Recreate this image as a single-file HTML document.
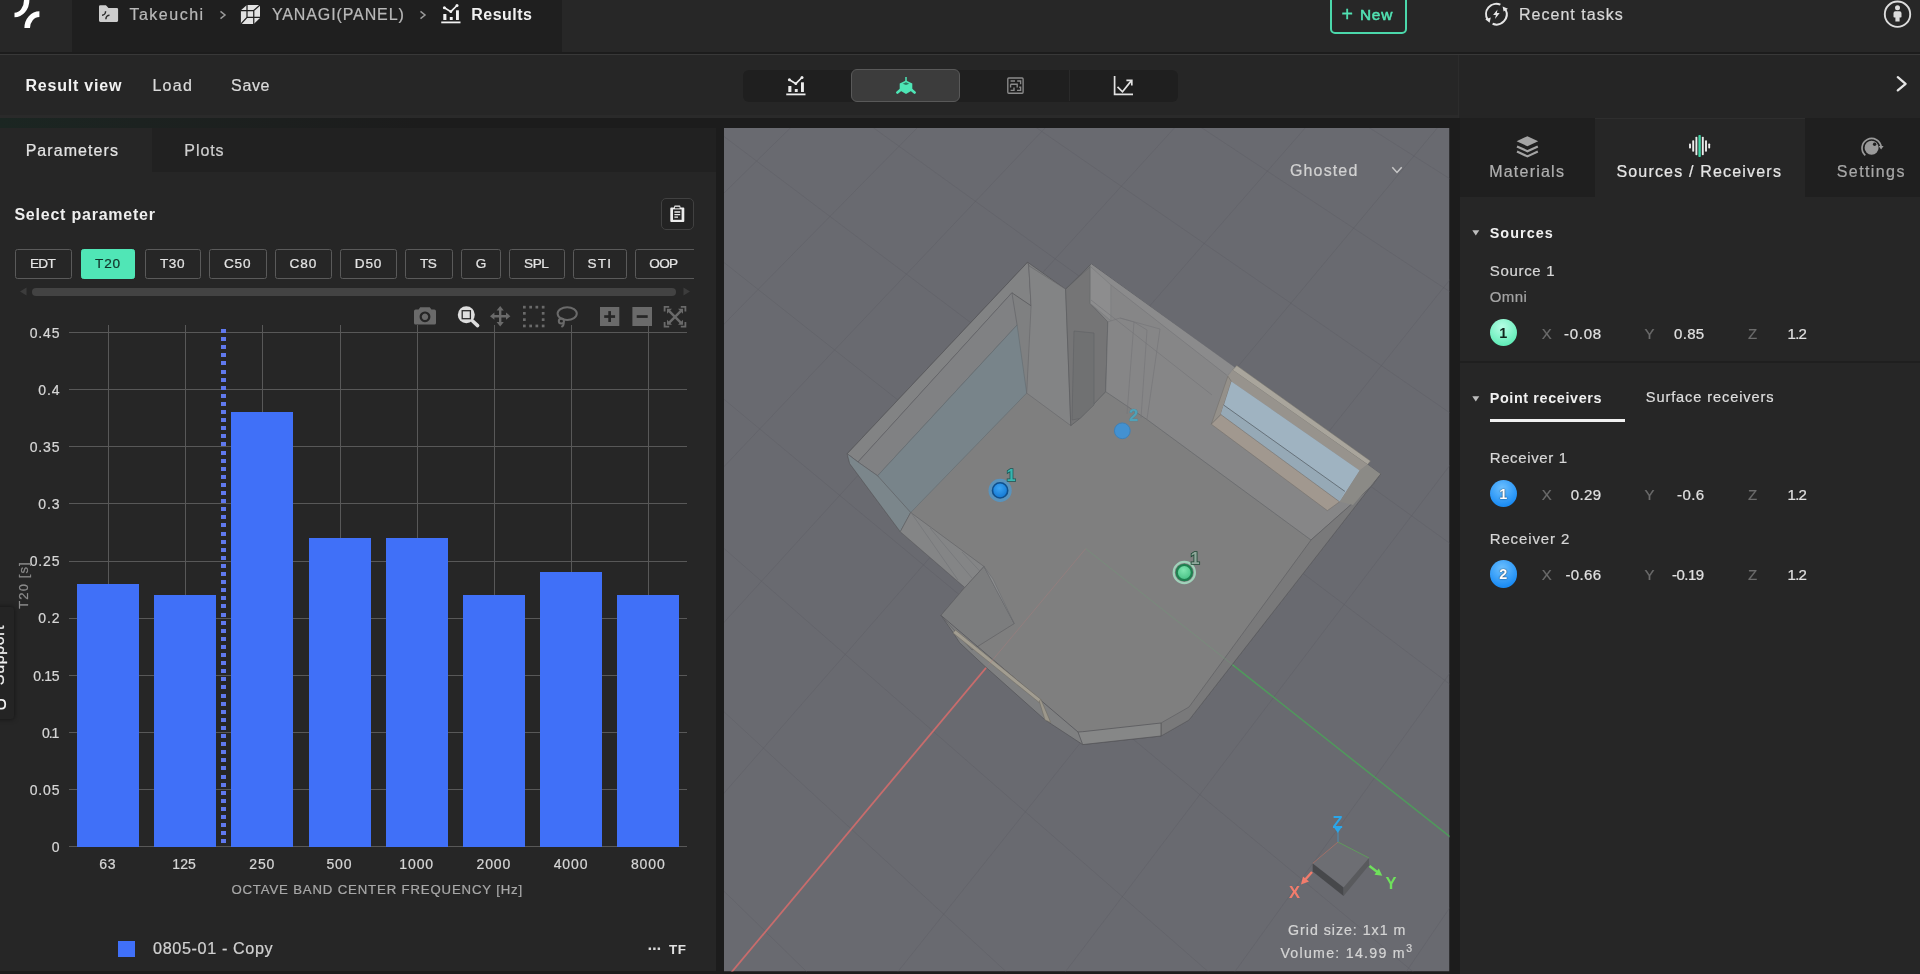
<!DOCTYPE html>
<html lang="en"><head><meta charset="utf-8"><title>Results</title>
<style>
*{box-sizing:border-box;margin:0;padding:0}
html,body{width:1920px;height:974px;overflow:hidden;background:#1c1c1c}
body{font-family:"Liberation Sans",sans-serif;color:#ddd}
#app{will-change:transform;position:relative;width:1920px;height:974px;overflow:hidden;background:#1c1c1c}
.abs{position:absolute}
.t{position:absolute;white-space:pre;display:block;-webkit-text-stroke:.22px currentColor}
svg{position:absolute;overflow:visible}
.st{font-family:"Liberation Sans",sans-serif;font-weight:700}
.pbtn{position:absolute;top:248.5px;height:30px;border:1px solid #5a5a5a;border-radius:2.5px;color:#e4e4e4;font-size:14.5px;letter-spacing:.9px;display:flex;align-items:center;justify-content:center;padding-left:1px}
.pbtn.on{background:#50e6b6;border-color:#50e6b6;color:#12332a}
</style></head>
<body><div id="app">
<div class="abs" style="left:0;top:0;width:1920px;height:52px;background:#272727"></div>
<div class="abs" style="left:72px;top:0;width:490px;height:52px;background:#1f1f1f"></div>
<div class="abs" style="left:0;top:52px;width:1920px;height:2px;background:#1c1c1c"></div>
<div class="abs" style="left:0;top:54px;width:1920px;height:1px;background:#383838"></div>
<div class="abs" style="left:0;top:55px;width:1920px;height:63px;background:#262626;border-bottom:3.5px solid #2a2a2a"></div>
<div class="abs" style="left:1458px;top:55px;width:462px;height:63px;background:#252525;border-left:1px solid #2c2c2c"></div>
<svg style="left:0;top:0" width="72" height="50" viewBox="0 0 72 50"><g fill="#fff">
<path d="M29.4 -1 L29.4 0 A14.9 17.2 0 0 1 14.5 17.2 L14.5 12.8 A9.5 12.8 0 0 0 24 0 L24 -1 Z"/><path d="M24.4 28 A15 16.75 0 0 1 39.4 11.25 L39.4 16.9 A9.4 11.1 0 0 0 30 28 Z"/></g></svg>
<svg style="left:98px;top:4px" width="22" height="20" viewBox="98 4 22 20">
<path d="M99 6.6 q0-1.3 1.3-1.3 h5.6 l2.6 2.6 h8.3 q1.3 0 1.3 1.3 v11.4 q0 1.3 -1.3 1.3 h-16.5 q-1.3 0 -1.3 -1.3z" fill="#cdcdcd"/>
<g fill="none" stroke="#2a2a2a" stroke-width="1.5"><path d="M102 15.2 A3.6 4 0 0 0 105.6 11.2"/><path d="M105.9 19.2 A3.6 4 0 0 1 109.5 15.2"/></g></svg>
<span class="t" style="left:129.40px;top:6.71px;font-size:16px;line-height:16px;letter-spacing:1.514px;color:#b9b9b9;">Takeuchi</span>
<svg style="left:218.7px;top:8.7px" width="8" height="12" viewBox="-4 -6 8 12"><path d="M-2.5 -3.7 L2 0 L-2.5 3.7" fill="none" stroke="#9a9a9a" stroke-width="1.5"/></svg>
<svg style="left:419.4px;top:8.7px" width="8" height="12" viewBox="-4 -6 8 12"><path d="M-2.5 -3.7 L2 0 L-2.5 3.7" fill="none" stroke="#9a9a9a" stroke-width="1.5"/></svg>
<svg style="left:239px;top:3px" width="23" height="23" viewBox="239 3 23 23">
<path d="M246.9 5 H260 V18.1 L253.75 24 H240.9 V10.3z" fill="#e2e2e2"/>
<g fill="none" stroke="#1f1f1f" stroke-width="1.25"><path d="M247 5V17.3H260M240.9 10.5H253.75V24M253.75 10.5L260 5M247 17.3L240.9 24"/></g></svg>
<span class="t" style="left:271.90px;top:6.71px;font-size:16px;line-height:16px;letter-spacing:0.890px;color:#b9b9b9;">YANAGI(PANEL)</span>
<svg style="left:440px;top:3px" width="22" height="22" viewBox="440 3 22 22">
<g fill="#f2f2f2"><rect x="441.25" y="21.5" width="19.25" height="1.8"/><rect x="443.3" y="14" width="3.1" height="6"/><rect x="449.8" y="17" width="2.9" height="3"/><rect x="456" y="10.3" width="2.9" height="9.7"/>
<circle cx="444.4" cy="7.8" r="1.5"/><circle cx="450.8" cy="11.7" r="1.4"/><circle cx="457" cy="5.5" r="1.5"/></g>
<path d="M444.4 7.8L450.8 11.7L457 5.5" fill="none" stroke="#f2f2f2" stroke-width="1.7"/></svg>
<span class="t" style="left:471.30px;top:6.71px;font-size:16px;line-height:16px;letter-spacing:0.467px;color:#f0f0f0;font-weight:700;-webkit-text-stroke:0;">Results</span>
<div class="abs" style="left:1329.5px;top:-6px;width:77px;height:39.8px;border:2px solid #4bd8ab;border-radius:5px"></div>
<span class="t" style="left:1341.60px;top:5.01px;font-size:19.6px;line-height:19.6px;letter-spacing:0.000px;color:#52e3b4;-webkit-text-stroke:.35px #52e3b4;">+</span>
<span class="t" style="left:1359.90px;top:7.06px;font-size:15.4px;line-height:15.4px;letter-spacing:0.796px;color:#52e3b4;-webkit-text-stroke:.55px #52e3b4;">New</span>
<svg style="left:1483px;top:1px" width="27" height="27" viewBox="1483 1 27 27"><g fill="none" stroke="#e6e6e6" stroke-width="2">
<path d="M1500.4 4.7 A10.3 10.3 0 0 0 1487.6 19.6"/><path d="M1492.6 23.8 A10.3 10.3 0 0 0 1505.6 9.6"/></g>
<path d="M1485.3 19.2 L1490.8 17.6 L1489.6 22.8z M1502.6 6.4 L1508 8.8 L1503.6 11.4z" fill="#e6e6e6"/>
<path d="M1497.5 9.4L1493.1 14.9H1495.9L1495 19.1L1499.7 13.1H1496.9z" fill="#e6e6e6"/></svg>
<span class="t" style="left:1518.90px;top:7.36px;font-size:16px;line-height:16px;letter-spacing:1.038px;color:#d8d8d8;">Recent tasks</span>
<svg style="left:1883px;top:0px" width="30" height="30" viewBox="1883 0 30 30"><circle cx="1897.500" cy="14.200" r="12.700" fill="none" stroke="#dcdcdc" stroke-width="1.900"/>
<circle cx="1897.500" cy="7.800" r="2.500" fill="#dcdcdc"/><path d="M1895.400 11.300 h4.200 q1.900 0 1.900 1.900 v3.600 q0 .8 -.8 .8 h-1.100 v4 h-4.200 v-4 h-1.100 q-.8 0 -.8 -.8 v-3.600 q0-1.900 1.900-1.900z" fill="#dcdcdc"/></svg>
<span class="t" style="left:25.40px;top:77.96px;font-size:16px;line-height:16px;letter-spacing:0.797px;color:#f2f2f2;font-weight:700;-webkit-text-stroke:0;">Result view</span>
<span class="t" style="left:152.40px;top:77.96px;font-size:16px;line-height:16px;letter-spacing:1.268px;color:#dadada;">Load</span>
<span class="t" style="left:231.10px;top:77.96px;font-size:16px;line-height:16px;letter-spacing:0.610px;color:#dadada;">Save</span>
<svg style="left:1894px;top:74px" width="16" height="20" viewBox="1894 74 16 20"><path d="M1897.800 77.200L1905.600 83.800L1897.800 90.400" fill="none" stroke="#e4e4e4" stroke-width="2.300" stroke-linecap="round" stroke-linejoin="round"/></svg>
<div class="abs" style="left:743px;top:69.5px;width:435px;height:32px;background:#1f1f1f;border-radius:6px"></div>
<div class="abs" style="left:851.4px;top:69.3px;width:108.8px;height:32.6px;background:#3c3c3c;border:1px solid #595959;border-radius:6px"></div>
<div class="abs" style="left:1068.5px;top:70px;width:1px;height:31px;background:#2a2a2a"></div>
<svg style="left:785.4px;top:74.9px" width="22" height="22" viewBox="440 3 22 22">
<g fill="#ececec"><rect x="441.25" y="21.5" width="19.25" height="1.8"/><rect x="443.3" y="14" width="3.1" height="6"/><rect x="449.8" y="17" width="2.9" height="3"/><rect x="456" y="10.3" width="2.9" height="9.7"/>
<circle cx="444.4" cy="7.8" r="1.5"/><circle cx="450.8" cy="11.7" r="1.4"/><circle cx="457" cy="5.5" r="1.5"/></g>
<path d="M444.4 7.8L450.8 11.7L457 5.5" fill="none" stroke="#ececec" stroke-width="1.7"/></svg>
<svg style="left:894px;top:75px" width="24" height="22" viewBox="894 75 24 22">
<path d="M906 76.9 V82" stroke="#4ee6b6" stroke-width="1.5"/>
<path d="M906 80.500 L912.300 83.400 V90.300 L906 94.100 L899.700 90.300 V83.400z" fill="#4ee6b6"/>
<path d="M900.400 90 L897.400 92.500 M911.600 90 L914.600 92.500" stroke="#4ee6b6" stroke-width="2.700" stroke-linecap="round"/>
<path d="M906 82.300 L909.300 83.750 L906 85.100 L902.700 83.750z" fill="#2f7a63"/>
</svg>
<svg style="left:1006px;top:76px" width="19" height="19" viewBox="1006 76 19 19"><g fill="none" stroke="#8c8c8c" stroke-width="1.350">
<rect x="1007.800" y="77.950" width="15.300" height="15.300" rx="1"/><path d="M1010.600 81h4.400M1017.200 81h3.400v3.300 M1010.600 84.200h6.600v3.200 M1010.600 84.200v3.200 M1010.600 90.400h3.400v-3 M1017 90.400h3.600v-3.200h-1.400"/></g></svg>
<svg style="left:1112px;top:74px" width="23" height="23" viewBox="1112 74 23 23"><g fill="none" stroke="#e2e2e2" stroke-width="1.700">
<path d="M1114.600 76V94.300H1133"/><path d="M1117.500 86.800L1122.500 91.800L1131.400 80.600"/><path d="M1126.400 80.300H1131.800V85.600"/></g></svg>
<div class="abs" style="left:0;top:118px;width:500px;height:10px;background:linear-gradient(90deg,#1b2622 0,#1c2220 140px,#1c1c1c 420px)"></div>
<div class="abs" style="left:0;top:128px;width:716px;height:843px;background:#262626"></div>
<div class="abs" style="left:152px;top:128px;width:564px;height:44px;background:#212121"></div>
<span class="t" style="left:25.65px;top:142.86px;font-size:16px;line-height:16px;letter-spacing:1.061px;color:#e4e4e4;">Parameters</span>
<span class="t" style="left:184.30px;top:142.86px;font-size:16px;line-height:16px;letter-spacing:0.932px;color:#cfcfcf;">Plots</span>
<span class="t" style="left:14.40px;top:206.96px;font-size:16px;line-height:16px;letter-spacing:0.776px;color:#efefef;font-weight:700;-webkit-text-stroke:0;">Select parameter</span>
<div class="abs" style="left:661px;top:198px;width:33px;height:32px;border:1px solid #414141;border-radius:5px;background:#232323"></div>
<svg style="left:668px;top:204px" width="20" height="20" viewBox="668 204 20 20"><path d="M671.2 207.6 h3 v-1.2 q0-.8 .8-.8 h4.6 q.8 0 .8 .8 v1.2 h3 q.9 0 .9 .9 v12.6 q0 .9 -.9 .9 h-12.2 q-.9 0 -.9 -.9 v-12.6 q0-.9 .9-.9z" fill="#ededed"/>
<rect x="673" y="209.4" width="8.6" height="10.4" fill="#262626"/><rect x="675" y="206.8" width="4.6" height="1.6" fill="#262626"/>
<path d="M674.4 212h5.8M674.4 214.6h5.8M674.4 217.2h3.6" stroke="#ededed" stroke-width="1.3"/></svg>
<div class="abs" style="left:0;top:240px;width:694.3px;height:48px;overflow:hidden">
<div class="pbtn" style="left:15.4px;top:8.5px;width:56.2px"></div>
<span class="t" style="left:29.90px;top:17.29px;font-size:13.6px;line-height:13.6px;letter-spacing:-0.601px;color:#e4e4e4;">EDT</span>
<div class="pbtn on" style="left:81.0px;top:8.5px;width:54.4px"></div>
<span class="t" style="left:95.10px;top:17.29px;font-size:13.6px;line-height:13.6px;letter-spacing:0.782px;color:#12332a;">T20</span>
<div class="pbtn" style="left:144.8px;top:8.5px;width:56.2px"></div>
<span class="t" style="left:160.08px;top:17.29px;font-size:13.6px;line-height:13.6px;letter-spacing:0.482px;color:#e4e4e4;">T30</span>
<div class="pbtn" style="left:209.0px;top:8.5px;width:57.6px"></div>
<span class="t" style="left:223.90px;top:17.29px;font-size:13.6px;line-height:13.6px;letter-spacing:0.825px;color:#e4e4e4;">C50</span>
<div class="pbtn" style="left:275.0px;top:8.5px;width:56.9px"></div>
<span class="t" style="left:289.45px;top:17.29px;font-size:13.6px;line-height:13.6px;letter-spacing:0.925px;color:#e4e4e4;">C80</span>
<div class="pbtn" style="left:340.3px;top:8.5px;width:56.7px"></div>
<span class="t" style="left:354.75px;top:17.29px;font-size:13.6px;line-height:13.6px;letter-spacing:0.825px;color:#e4e4e4;">D50</span>
<div class="pbtn" style="left:405.4px;top:8.5px;width:47.4px"></div>
<span class="t" style="left:420.05px;top:17.29px;font-size:13.6px;line-height:13.6px;letter-spacing:-0.479px;color:#e4e4e4;">TS</span>
<div class="pbtn" style="left:461.2px;top:8.5px;width:39.8px"></div>
<span class="t" style="left:475.82px;top:17.29px;font-size:13.6px;line-height:13.6px;letter-spacing:0.000px;color:#e4e4e4;">G</span>
<div class="pbtn" style="left:509.4px;top:8.5px;width:55.4px"></div>
<span class="t" style="left:524.10px;top:17.29px;font-size:13.6px;line-height:13.6px;letter-spacing:-0.479px;color:#e4e4e4;">SPL</span>
<div class="pbtn" style="left:573.2px;top:8.5px;width:53.4px"></div>
<span class="t" style="left:587.60px;top:17.29px;font-size:13.6px;line-height:13.6px;letter-spacing:1.121px;color:#e4e4e4;">STI</span>
<div class="pbtn" style="left:635.0px;top:8.5px;width:65.0px"></div>
<span class="t" style="left:649.20px;top:17.29px;font-size:13.6px;line-height:13.6px;letter-spacing:-0.614px;color:#e4e4e4;">OOP</span>
</div>
<div class="abs" style="left:32px;top:287.5px;width:644px;height:8px;border-radius:4px;background:#434343"></div>
<svg style="left:18px;top:286px" width="10" height="11" viewBox="0 0 10 11"><path d="M8.5 1.5v8L2 5.5z" fill="#3c3c3c"/></svg>
<svg style="left:682px;top:286px" width="10" height="11" viewBox="0 0 10 11"><path d="M1.5 1.5v8L8 5.5z" fill="#3c3c3c"/></svg>
<svg style="left:0;top:300px" width="716" height="600" viewBox="0 300 716 600" shape-rendering="crispEdges"><rect x="69" y="845.5" width="618" height="1" fill="#585858"/><rect x="69" y="788.5" width="618" height="1" fill="#585858"/><rect x="69" y="731.5" width="618" height="1" fill="#585858"/><rect x="69" y="674.5" width="618" height="1" fill="#585858"/><rect x="69" y="617.5" width="618" height="1" fill="#585858"/><rect x="69" y="560.5" width="618" height="1" fill="#585858"/><rect x="69" y="502.5" width="618" height="1" fill="#585858"/><rect x="69" y="445.5" width="618" height="1" fill="#585858"/><rect x="69" y="388.5" width="618" height="1" fill="#585858"/><rect x="69" y="331.5" width="618" height="1" fill="#585858"/><rect x="107.5" y="325" width="1" height="521.5" fill="#585858"/><rect x="184.5" y="325" width="1" height="521.5" fill="#585858"/><rect x="261.5" y="325" width="1" height="521.5" fill="#585858"/><rect x="339.5" y="325" width="1" height="521.5" fill="#585858"/><rect x="416.5" y="325" width="1" height="521.5" fill="#585858"/><rect x="493.5" y="325" width="1" height="521.5" fill="#585858"/><rect x="570.5" y="325" width="1" height="521.5" fill="#585858"/><rect x="647.5" y="325" width="1" height="521.5" fill="#585858"/><rect x="76.9" y="583.5" width="62.1" height="263.0" fill="#4070f8"/><rect x="154.1" y="595.0" width="62.1" height="251.5" fill="#4070f8"/><rect x="231.3" y="412.0" width="62.1" height="434.5" fill="#4070f8"/><rect x="308.5" y="537.8" width="62.1" height="308.7" fill="#4070f8"/><rect x="385.7" y="537.8" width="62.1" height="308.7" fill="#4070f8"/><rect x="462.9" y="595.0" width="62.1" height="251.5" fill="#4070f8"/><rect x="540.1" y="572.1" width="62.1" height="274.4" fill="#4070f8"/><rect x="617.3" y="595.0" width="62.1" height="251.5" fill="#4070f8"/><path d="M223.7 329V847" stroke="#6079ee" stroke-width="4.500" stroke-dasharray="4 4.1" fill="none"/></svg>
<span class="t" style="left:51.81px;top:840.05px;font-size:14px;line-height:14px;letter-spacing:0.000px;color:#d6d6d6;">0</span>
<span class="t" style="left:29.65px;top:782.88px;font-size:14px;line-height:14px;letter-spacing:0.900px;color:#d6d6d6;">0.05</span>
<span class="t" style="left:42.00px;top:725.71px;font-size:14px;line-height:14px;letter-spacing:-1.131px;color:#d6d6d6;">0.1</span>
<span class="t" style="left:33.30px;top:668.54px;font-size:14px;line-height:14px;letter-spacing:-0.316px;color:#d6d6d6;">0.15</span>
<span class="t" style="left:38.34px;top:611.37px;font-size:14px;line-height:14px;letter-spacing:0.900px;color:#d6d6d6;">0.2</span>
<span class="t" style="left:29.65px;top:554.20px;font-size:14px;line-height:14px;letter-spacing:0.900px;color:#d6d6d6;">0.25</span>
<span class="t" style="left:38.34px;top:497.03px;font-size:14px;line-height:14px;letter-spacing:0.900px;color:#d6d6d6;">0.3</span>
<span class="t" style="left:29.65px;top:439.86px;font-size:14px;line-height:14px;letter-spacing:0.900px;color:#d6d6d6;">0.35</span>
<span class="t" style="left:38.34px;top:382.69px;font-size:14px;line-height:14px;letter-spacing:0.900px;color:#d6d6d6;">0.4</span>
<span class="t" style="left:29.65px;top:325.52px;font-size:14px;line-height:14px;letter-spacing:0.900px;color:#d6d6d6;">0.45</span>
<span class="t" style="left:99.16px;top:856.95px;font-size:14px;line-height:14px;letter-spacing:0.900px;color:#d6d6d6;">63</span>
<span class="t" style="left:172.30px;top:856.95px;font-size:14px;line-height:14px;letter-spacing:0.120px;color:#d6d6d6;">125</span>
<span class="t" style="left:249.22px;top:856.95px;font-size:14px;line-height:14px;letter-spacing:0.900px;color:#d6d6d6;">250</span>
<span class="t" style="left:326.42px;top:856.95px;font-size:14px;line-height:14px;letter-spacing:0.900px;color:#d6d6d6;">500</span>
<span class="t" style="left:399.28px;top:856.95px;font-size:14px;line-height:14px;letter-spacing:0.900px;color:#d6d6d6;">1000</span>
<span class="t" style="left:476.48px;top:856.95px;font-size:14px;line-height:14px;letter-spacing:0.900px;color:#d6d6d6;">2000</span>
<span class="t" style="left:553.68px;top:856.95px;font-size:14px;line-height:14px;letter-spacing:0.900px;color:#d6d6d6;">4000</span>
<span class="t" style="left:630.88px;top:856.95px;font-size:14px;line-height:14px;letter-spacing:0.900px;color:#d6d6d6;">8000</span>
<span class="t" style="left:231.40px;top:882.93px;font-size:13.2px;line-height:13.2px;letter-spacing:0.843px;color:#a8a8a8;">OCTAVE BAND CENTER FREQUENCY [Hz]</span>
<span class="t" style="left:22.6px;top:585px;font-size:13px;line-height:13px;letter-spacing:1.1px;color:#8c8c8c;transform:translate(-50%,-50%) rotate(-90deg)">T20 [s]</span>
<div class="abs" style="left:118px;top:941px;width:17px;height:16px;background:#4070f8"></div>
<span class="t" style="left:153.00px;top:940.49px;font-size:16.2px;line-height:16.2px;letter-spacing:0.625px;color:#d0d0d0;">0805-01 - Copy</span>
<span class="t" style="left:647.40px;top:940.11px;font-size:17px;line-height:17px;letter-spacing:0.000px;color:#d8d8d8;font-weight:700;-webkit-text-stroke:0;letter-spacing:-1.05px;">···</span>
<span class="t" style="left:668.90px;top:943.16px;font-size:13.4px;line-height:13.4px;letter-spacing:0.629px;color:#e0e0e0;font-weight:700;-webkit-text-stroke:0;">TF</span>
<svg style="left:410px;top:302px" width="280" height="30" viewBox="410 302 280 30">
<g fill="#6a6a6a">
<path d="M414 311.2 q0-1.6 1.6-1.6 h3 l1.6-2.4 h9.6 l1.6 2.4 h3 q1.6 0 1.6 1.6 v11.8 q0 1.6 -1.6 1.6 h-18.8 q-1.600 0 -1.600 -1.600z M425 311.4 a5.400 5.400 0 1 0 0.010 0z M425 313.600 a3.200 3.200 0 1 1 -0.010 0z" fill-rule="evenodd"/>
<path d="M500.200 306 l3.600 4.400 h-2.400 v4.600 h4.600 v-2.400 l4.400 3.600 l-4.400 3.600 v-2.400 h-4.600 v4.600 h2.400 l-3.600 4.400 l-3.600 -4.400 h2.400 v-4.600 h-4.600 v2.400 l-4.400 -3.600 l4.400 -3.600 v2.400 h4.600 v-4.600 h-2.400z"/>
<rect x="600" y="307" width="19.300" height="19"/><rect x="632.400" y="307" width="19.600" height="19"/>
</g>
<g fill="#262626"><rect x="604.200" y="315.200" width="10.900" height="2.700"/><rect x="608.300" y="311.100" width="2.700" height="10.900"/><rect x="636.700" y="315.200" width="11" height="2.700"/></g>
<circle cx="466.300" cy="314.700" r="8.500" fill="#dedede"/><path d="M472.600 321 l5 4.600" stroke="#dedede" stroke-width="3.600" stroke-linecap="round" fill="none"/><rect x="462.200" y="310.700" width="8.200" height="8" fill="none" stroke="#2a2a2a" stroke-width="1.300"/>
<g fill="#6a6a6a"><rect x="523" y="305.8" width="2.700" height="2.700"/><rect x="523" y="312" width="2.700" height="2.700"/><rect x="523" y="318.3" width="2.700" height="2.700"/><rect x="523" y="324.6" width="2.700" height="2.700"/><rect x="529.3" y="305.8" width="2.700" height="2.700"/><rect x="529.3" y="324.6" width="2.700" height="2.700"/><rect x="535.5" y="305.8" width="2.700" height="2.700"/><rect x="535.5" y="324.6" width="2.700" height="2.700"/><rect x="541.8" y="305.8" width="2.700" height="2.700"/><rect x="541.8" y="312" width="2.700" height="2.700"/><rect x="541.8" y="318.3" width="2.700" height="2.700"/><rect x="541.8" y="324.6" width="2.700" height="2.700"/></g>
<g fill="none" stroke="#6a6a6a" stroke-width="2"><ellipse cx="567.200" cy="313.600" rx="9.600" ry="6.400"/><circle cx="561.400" cy="321" r="2.600"/><path d="M563.400 322.600 q1 2.600 -2 4.400"/></g>
<g fill="none" stroke="#6a6a6a" stroke-width="1.800"><path d="M664.600 311.400v-4.600h4.600 M680.800 306.800h4.600v4.600 M685.400 322v4.600h-4.600 M669.200 326.600h-4.600v-4.600"/></g>
<g fill="none" stroke="#6a6a6a" stroke-width="2.400"><path d="M669 310.800l12 12M681 310.800l-12 12"/></g>
<g fill="#6a6a6a"><path d="M667 308.800h5l-5 5z M683 308.800h-5l5 5z M667 324.800h5l-5 -5z M683 324.800h-5l5 -5z"/></g>
</svg>
<div class="abs" style="left:-4px;top:606.5px;width:18px;height:112.5px;background:#242424;border-radius:3px;box-shadow:0 0 5px rgba(0,0,0,.55)"></div>
<span class="t" style="left:-1.200px;top:654.5px;font-size:16px;line-height:16px;letter-spacing:.6px;color:#f0f0f0;transform:translate(-50%,-50%) rotate(-90deg)">Support</span>
<svg style="left:0;top:697px" width="8" height="14" viewBox="0 697 8 14"><path d="M-2 699.800 h3.600 q3.600 0 3.600 4.400 q0 4.400 -3.600 4.400 h-3.600" fill="none" stroke="#f0f0f0" stroke-width="1.800"/></svg>
<svg style="left:724px;top:128px" width="725.5" height="843.5" viewBox="724 128 725.5 843.5"><defs><clipPath id="vc"><rect x="724" y="128" width="725.5" height="843.5"/></clipPath><radialGradient id="gb" cx="45%" cy="35%" r="65%"><stop offset="0" stop-color="#3aa4f4"/><stop offset="1" stop-color="#1478d2"/></radialGradient><radialGradient id="gg" cx="45%" cy="35%" r="65%"><stop offset="0" stop-color="#7fe6b0"/><stop offset="1" stop-color="#45c084"/></radialGradient></defs><g clip-path="url(#vc)"><rect x="724" y="128" width="725.5" height="843.5" fill="#696a70"/><path d="M-259.0 606.7L869.3 -364.9M-201.6 678.2L932.2 -328.1M-141.4 753.2L997.3 -290.0M-78.3 831.8L1064.8 -250.5M-12.0 914.3L1134.8 -209.6M57.7 1001.0L1207.5 -167.1M131.0 1092.3L1282.9 -123.0M208.3 1188.5L1361.2 -77.1M289.9 1290.1L1442.7 -29.5M467.5 1511.2L1615.7 71.8M564.3 1631.7L1707.8 125.6M667.2 1759.8L1803.8 181.8M776.7 1896.2L1904.1 240.4M893.5 2041.6L2008.8 301.7M1018.4 2197.1L2118.5 365.8M1152.2 2363.6L2233.3 433.0M1295.8 2542.5L2353.7 503.4M-259.0 606.7L1295.8 2542.5M-161.6 522.9L1399.8 2342.2M-68.2 442.4L1496.9 2154.9M21.4 365.3L1587.9 1979.6M107.4 291.2L1673.3 1815.0M190.1 220.0L1753.6 1660.2M269.7 151.4L1829.2 1514.4M346.3 85.5L1900.6 1376.8M491.1 -39.3L2032.0 1123.6M559.7 -98.4L2092.6 1006.8M626.0 -155.4L2150.1 895.9M689.9 -210.4L2204.8 790.6M751.7 -263.7L2256.8 690.2M811.5 -315.1L2306.4 594.6M869.3 -364.9L2353.7 503.4" fill="none" stroke="#5c5d63" stroke-width="1" opacity=".42"/><path d="M1527.5 20.1L1085.7 548.6" stroke="#5c5d63" stroke-width="1" opacity=".42"/><path d="M420.0 22.0L1085.7 548.6" stroke="#5c5d63" stroke-width="1" opacity=".42"/><path d="M1085.7 548.6L656.9 1061.5" stroke="#c86c6c" stroke-width="1.800"/><path d="M1085.7 548.6L1593.2 950.1" stroke="#4f9a5c" stroke-width="1.5"/><polygon points="1027.6,262.2 1065.6,289.2 1091.0,264.0 1380.4,474.1 1189.0,720.0 1161.0,736.0 1082.7,744.6 1045.0,719.9 984.2,665.7 959.6,642.7 952.0,631.0 941.0,615.4 964.8,587.5 900.3,531.7 849.7,463.6 847.2,453.8" fill="#7f8081" stroke="#55565a" stroke-width=".75" stroke-linejoin="round"/><polygon points="1026.7,393.1 910.7,512.5 984.0,566.5 964.8,587.5 941.0,615.4 1078.0,732.0 1082.7,731.7 1161.0,723.0 1189.0,707.0 1311.0,540.0 1146.8,419.4 1105.7,391.7 1080.0,418.4 1070.8,425.6" fill="#7f7f7f"/><polygon points="1027.6,262.2 847.2,453.8 858.0,462.0 1011.9,292.8 1031.1,305.8 1028.8,265.7" fill="#828384" stroke="#55565a" stroke-width=".75" stroke-linejoin="round"/><polygon points="1011.9,292.8 858.0,462.0 877.6,475.8 1017.1,325.0" fill="#808183" stroke="#5f6064" stroke-width=".6"/><polygon points="1017.1,325.0 877.6,475.8 900.3,531.7 910.7,512.5 1026.7,393.1" fill="#78848a" stroke="#636b70" stroke-width=".6"/><polygon points="1028.8,265.7 1065.6,289.2 1070.8,425.6 1026.7,393.1 1031.1,305.8" fill="#838485" stroke="#66676a" stroke-width=".6"/><polygon points="1065.6,289.2 1090.3,266.4 1090.3,303.4 1107.8,321.9 1105.7,391.7 1080.0,418.4 1070.8,425.6" fill="#757576" stroke="#5a5b5e" stroke-width=".7"/><polygon points="1074.0,331.0 1094.0,333.0 1094.0,405.0 1080.0,418.4 1072.0,420.0" fill="#707172" stroke="#606164" stroke-width=".6"/><polygon points="1091.0,264.0 1380.4,474.1 1372.0,486.0 1311.0,540.0 1146.8,419.4 1105.7,391.7 1107.8,321.9 1090.3,303.4" fill="#868687" stroke="#606164" stroke-width=".6"/><polygon points="1091.0,264.0 1234.9,367.5 1226.9,375.3 1110.9,284.9 1090.3,266.4" fill="#8b8b8c"/><polygon points="1090.3,266.4 1110.9,284.9 1110.8,320.6 1090.3,303.4" fill="#8d8d8e" stroke="#77787a" stroke-width=".5"/><path d="M1110.9 284.9L1226.9 375.3 M1091 300 L1212 395 M1107.800 321.900 L1120 318 L1134 322 L1147 330 L1141 418 M1134 322 L1127 414 M1120 318 L1160 329 L1147 419" fill="none" stroke="#737477" stroke-width=".6"/><polygon points="1380.4,474.1 1189.0,720.0 1161.0,736.0 1161.0,723.0 1189.0,707.0 1311.0,540.0 1372.0,486.0" fill="#79797a" stroke="#5a5b5e" stroke-width=".6"/><polygon points="1078.0,732.0 1082.7,731.7 1161.0,723.0 1161.0,736.0 1082.7,744.6" fill="#868787" stroke="#55565a" stroke-width=".75" stroke-linejoin="round"/><polygon points="847.2,453.8 849.7,463.6 900.3,531.7 910.7,512.5 877.6,475.8 858.0,462.0" fill="#7b868b" stroke="#5a5b5e" stroke-width=".6"/><polygon points="910.7,512.5 900.3,531.7 964.8,587.5 984.0,566.5" fill="#848586" stroke="#5f6063" stroke-width=".6"/><path d="M912 514L958 580M930 528L972 578M962 552L990 582" fill="none" stroke="#717275" stroke-width=".6"/><polygon points="964.8,587.5 941.0,615.4 972.0,650.0 1014.2,623.6 984.0,566.5" fill="#7c7d7e" stroke="#5c5d60" stroke-width=".6"/><polygon points="984.0,566.5 993.0,579.0 1014.2,623.6" fill="#8b8c8d" stroke="#6a6b6e" stroke-width=".6"/><path d="M941 615.4L1078 732" stroke="#55565a" stroke-width=".8" fill="none"/><polygon points="953.0,632.9 955.5,630.0 1041.0,699.5 1039.2,702.5" fill="#a29d91" stroke="#6a675f" stroke-width=".5"/><polygon points="1039.2,701.0 1041.0,699.5 1050.7,722.4 1045.0,719.9" fill="#9c978b" stroke="#6a675f" stroke-width=".5"/><polygon points="1234.9,367.5 1236.8,365.6 1370.5,461.0 1367.5,464.5 1232.5,370.0" fill="#a9a59c" stroke="#77746d" stroke-width=".5"/><polygon points="1232.5,370.0 1367.5,464.5 1359.7,470.4 1231.4,381.4 1227.9,376.2" fill="#97938d"/><polygon points="1227.9,376.2 1231.4,381.4 1220.9,414.6 1211.3,424.2" fill="#94908a" stroke="#6e6b66" stroke-width=".5"/><polygon points="1231.4,381.4 1359.7,470.4 1339.6,501.8 1220.9,414.6" fill="#9fb3c1"/><polygon points="1223.6,405.0 1344.9,491.4 1339.6,501.8 1220.9,414.6" fill="#96a9b6"/><polygon points="1220.9,414.6 1339.6,501.8 1327.4,510.6 1211.3,424.2" fill="#a1988f" stroke="#6e6b66" stroke-width=".5"/><polygon points="1359.7,470.4 1367.5,464.5 1380.4,474.1 1353.0,505.0 1339.6,501.8" fill="#8b8a86"/><path d="M1223.6 405L1344.9 491.4" fill="none" stroke="#59626a" stroke-width=".8"/><path d="M1085.7 548.6L988.1 665.4" stroke="#b47c7c" stroke-width="1" opacity=".35"/><path d="M1085.7 548.6L1234.6 666.4" stroke="#6aa274" stroke-width="1" opacity=".35"/><circle cx="1000.1" cy="490.4" r="11.6" fill="#3ba4ee" opacity=".55"/><circle cx="1000.1" cy="490.4" r="7.6" fill="url(#gb)" stroke="#0f4f8c" stroke-width="1.6"/><circle cx="1122.3" cy="430.8" r="7.9" fill="#3e93d8" stroke="#3a80ba" stroke-width="1" opacity=".92"/><circle cx="1184.300" cy="572.500" r="10.600" fill="none" stroke="#a9e6c9" stroke-width="2.200" opacity=".8"/><circle cx="1184.300" cy="572.500" r="7.600" fill="url(#gg)" stroke="#1f8050" stroke-width="2.300"/><text x="1006.600" y="481" class="st" font-size="16.500" fill="#38b6b0" stroke="#1b5656" stroke-width="1.500" paint-order="stroke">1</text><text x="1129" y="421.400" class="st" font-size="16.500" fill="#4aa6c0" stroke="#4a8494" stroke-width=".7" paint-order="stroke" opacity=".9">2</text><text x="1190.400" y="563.600" class="st" font-size="16.500" fill="#8fa89b" stroke="#1f4a36" stroke-width="1.700" paint-order="stroke">1</text><polygon points="1338,842 1369,858 1343.6,887.5 1312.7,863.4" fill="#6d6e73"/><polygon points="1312.7,863.4 1312.7,871.4 1343.6,896 1343.6,887.5" fill="#47484b"/><polygon points="1343.6,887.5 1343.6,896 1369,865.2 1369,858" fill="#595a5d"/><path d="M1338 842L1312.700 863.400" stroke="#a07068" stroke-width="1"/><path d="M1338 842L1369 858" stroke="#5f9a5c" stroke-width="1"/><path d="M1338 842V832" stroke="#4a8fb8" stroke-width="1"/><path d="M1312 872 L1303.500 881.500" stroke="#f27c6c" stroke-width="2.400"/><path d="M1301 884.500 L1303 876.500 L1309 881.500z" fill="#f27c6c"/><path d="M1369.500 866 L1378 872.500" stroke="#6fe05c" stroke-width="2.400"/><path d="M1382.300 875.800 L1374.500 874.800 L1378.800 868.600z" fill="#6fe05c"/><path d="M1337.800 833 l-3.400 -5 h6.800z" fill="#2aa6ea"/><text x="1332.400" y="828.300" class="st" font-size="16.500" fill="#2aa6ea">Z</text><text x="1289" y="898" class="st" font-size="16.500" fill="#f27c6c">X</text><text x="1385.500" y="888.600" class="st" font-size="16.500" fill="#6fe05c">Y</text></g></svg>
<span class="t" style="left:1290.00px;top:163.26px;font-size:16px;line-height:16px;letter-spacing:1.136px;color:#d2d2d2;">Ghosted</span>
<svg style="left:1390px;top:164px" width="14" height="12" viewBox="1390 164 14 12"><path d="M1392.300 167.200L1397 172.400L1401.700 167.200" fill="none" stroke="#c8c8c8" stroke-width="1.500"/></svg>
<span class="t" style="left:1288.00px;top:923.28px;font-size:14.2px;line-height:14.2px;letter-spacing:0.988px;color:#d4d4d4;">Grid size: 1x1 m</span>
<span class="t" style="left:1280.40px;top:945.98px;font-size:14.2px;line-height:14.2px;letter-spacing:1.267px;color:#d4d4d4;">Volume: 14.99 m</span>
<span class="t" style="left:1406.20px;top:943.21px;font-size:10.5px;line-height:10.5px;letter-spacing:0.000px;color:#d4d4d4;">3</span>
<div class="abs" style="left:1460px;top:118px;width:460px;height:856px;background:#262626"></div>
<div class="abs" style="left:1460px;top:118px;width:460px;height:79px;background:#1f1f1f"></div>
<div class="abs" style="left:1594.500px;top:118px;width:210px;height:79px;background:#262626;border-top:1px solid #2e2e2e"></div>
<svg style="left:1515px;top:134px" width="25" height="25" viewBox="1515 134 25 25">
<path d="M1527.400 136.200 l10.800 5 l-10.800 5 l-10.800 -5z" fill="#a4a4a4"/>
<g fill="none" stroke="#a4a4a4" stroke-width="2.200"><path d="M1517 146.400 l10.400 4.800 l10.400 -4.800"/><path d="M1517 151.600 l10.400 4.800 l10.400 -4.800"/></g></svg>
<span class="t" style="left:1489.20px;top:164.26px;font-size:16px;line-height:16px;letter-spacing:1.224px;color:#b0b0b0;">Materials</span>
<svg style="left:1688px;top:134px" width="24" height="24" viewBox="1688 134 24 24"><rect x="1689.05" y="143.50" width="1.9" height="5" rx=".8" fill="#ececec"/><rect x="1692.25" y="140.25" width="1.9" height="11.5" rx=".8" fill="#ececec"/><rect x="1695.45" y="136.75" width="1.9" height="18.5" rx=".8" fill="#ececec"/><rect x="1698.40" y="135.00" width="2.4" height="22" rx=".8" fill="#3fd6a6"/><rect x="1701.85" y="136.75" width="1.9" height="18.5" rx=".8" fill="#ececec"/><rect x="1705.05" y="140.25" width="1.9" height="11.5" rx=".8" fill="#ececec"/><rect x="1708.25" y="143.50" width="1.9" height="5" rx=".8" fill="#ececec"/></svg>
<span class="t" style="left:1616.40px;top:164.26px;font-size:16px;line-height:16px;letter-spacing:1.185px;color:#e6e6e6;">Sources / Receivers</span>
<svg style="left:1860px;top:135px" width="25" height="24" viewBox="1860 135 25 24">
<circle cx="1871.600" cy="147.800" r="7" fill="#9a9a9a"/><circle cx="1874.600" cy="144.200" r="1.700" fill="#1f1f1f"/>
<path d="M1865.300 155.300 A9.600 9.600 0 1 1 1881.200 147.400" fill="none" stroke="#9a9a9a" stroke-width="1.700"/><path d="M1878.600 146 h5 l-2.500 3.400z" fill="#9a9a9a"/></svg>
<span class="t" style="left:1836.80px;top:164.26px;font-size:16px;line-height:16px;letter-spacing:1.398px;color:#a8a8a8;">Settings</span>
<svg style="left:1471.5px;top:230px" width="8" height="6" viewBox="0 0 8 6"><path d="M0.300 0.300h7L3.800 5.600z" fill="#bdbdbd"/></svg>
<span class="t" style="left:1489.70px;top:225.91px;font-size:14.4px;line-height:14.4px;letter-spacing:1.045px;color:#f0f0f0;font-weight:700;-webkit-text-stroke:0;">Sources</span>
<span class="t" style="left:1489.70px;top:263.20px;font-size:15px;line-height:15px;letter-spacing:0.694px;color:#d6d6d6;">Source 1</span>
<span class="t" style="left:1489.70px;top:288.90px;font-size:15px;line-height:15px;letter-spacing:0.454px;color:#a4a4a4;">Omni</span>
<div class="abs" style="left:1490.0px;top:319.09999999999997px;width:27.200px;height:27.200px;border-radius:50%;background:radial-gradient(circle at 45% 30%,#b8ffe6 0%,#62ecb8 75%)"></div><span class="t" style="left:1499.30px;top:326.11px;font-size:14.4px;line-height:14.4px;letter-spacing:0.000px;color:#10241c;font-weight:700;-webkit-text-stroke:0;">1</span>
<span class="t" style="left:1541.80px;top:325.50px;font-size:15px;line-height:15px;letter-spacing:0.000px;color:#6c6c6c;">X</span><span class="t" style="left:1644.40px;top:325.50px;font-size:15px;line-height:15px;letter-spacing:0.000px;color:#6c6c6c;">Y</span><span class="t" style="left:1747.90px;top:325.50px;font-size:15px;line-height:15px;letter-spacing:0.000px;color:#6c6c6c;">Z</span><span class="t" style="left:1564.10px;top:325.50px;font-size:15px;line-height:15px;letter-spacing:0.677px;color:#e0e0e0;">-0.08</span><span class="t" style="left:1674.00px;top:325.50px;font-size:15px;line-height:15px;letter-spacing:0.335px;color:#e0e0e0;">0.85</span><span class="t" style="left:1787.60px;top:325.50px;font-size:15px;line-height:15px;letter-spacing:-0.776px;color:#e0e0e0;">1.2</span>
<div class="abs" style="left:1460px;top:360.500px;width:460px;height:2px;background:#1f1f1f"></div>
<svg style="left:1471.5px;top:396px" width="8" height="6" viewBox="0 0 8 6"><path d="M0.300 0.300h7L3.800 5.600z" fill="#bdbdbd"/></svg>
<span class="t" style="left:1489.70px;top:390.51px;font-size:14.4px;line-height:14.4px;letter-spacing:0.617px;color:#f0f0f0;font-weight:700;-webkit-text-stroke:0;">Point receivers</span>
<div class="abs" style="left:1490px;top:419.300px;width:134.800px;height:3.200px;background:#f0f0f0"></div>
<span class="t" style="left:1645.80px;top:390.34px;font-size:14.6px;line-height:14.6px;letter-spacing:0.887px;color:#dedede;">Surface receivers</span>
<span class="t" style="left:1489.70px;top:450.10px;font-size:15px;line-height:15px;letter-spacing:0.622px;color:#d6d6d6;">Receiver 1</span>
<div class="abs" style="left:1490.0px;top:480.0px;width:27.200px;height:27.200px;border-radius:50%;background:radial-gradient(circle at 45% 30%,#6cc0ff 0%,#1b8cf4 75%)"></div><span class="t" style="left:1499.30px;top:487.01px;font-size:14.4px;line-height:14.4px;letter-spacing:0.000px;color:#fff;font-weight:700;-webkit-text-stroke:0;text-shadow:0 0 1.5px rgba(0,0,0,.9);">1</span>
<span class="t" style="left:1541.80px;top:486.70px;font-size:15px;line-height:15px;letter-spacing:0.000px;color:#6c6c6c;">X</span><span class="t" style="left:1644.40px;top:486.70px;font-size:15px;line-height:15px;letter-spacing:0.000px;color:#6c6c6c;">Y</span><span class="t" style="left:1747.90px;top:486.70px;font-size:15px;line-height:15px;letter-spacing:0.000px;color:#6c6c6c;">Z</span><span class="t" style="left:1570.80px;top:486.70px;font-size:15px;line-height:15px;letter-spacing:0.335px;color:#e0e0e0;">0.29</span><span class="t" style="left:1677.10px;top:486.70px;font-size:15px;line-height:15px;letter-spacing:0.417px;color:#e0e0e0;">-0.6</span><span class="t" style="left:1787.60px;top:486.70px;font-size:15px;line-height:15px;letter-spacing:-0.776px;color:#e0e0e0;">1.2</span>
<span class="t" style="left:1489.70px;top:531.00px;font-size:15px;line-height:15px;letter-spacing:0.878px;color:#d6d6d6;">Receiver 2</span>
<div class="abs" style="left:1490.0px;top:560.4px;width:27.200px;height:27.200px;border-radius:50%;background:radial-gradient(circle at 45% 30%,#6cc0ff 0%,#1b8cf4 75%)"></div><span class="t" style="left:1499.30px;top:567.41px;font-size:14.4px;line-height:14.4px;letter-spacing:0.000px;color:#fff;font-weight:700;-webkit-text-stroke:0;text-shadow:0 0 1.5px rgba(0,0,0,.9);">2</span>
<span class="t" style="left:1541.80px;top:567.30px;font-size:15px;line-height:15px;letter-spacing:0.000px;color:#6c6c6c;">X</span><span class="t" style="left:1644.40px;top:567.30px;font-size:15px;line-height:15px;letter-spacing:0.000px;color:#6c6c6c;">Y</span><span class="t" style="left:1747.90px;top:567.30px;font-size:15px;line-height:15px;letter-spacing:0.000px;color:#6c6c6c;">Z</span><span class="t" style="left:1565.40px;top:567.30px;font-size:15px;line-height:15px;letter-spacing:0.352px;color:#e0e0e0;">-0.66</span><span class="t" style="left:1671.90px;top:567.30px;font-size:15px;line-height:15px;letter-spacing:-0.473px;color:#e0e0e0;">-0.19</span><span class="t" style="left:1787.60px;top:567.30px;font-size:15px;line-height:15px;letter-spacing:-0.776px;color:#e0e0e0;">1.2</span>
</div></body></html>
